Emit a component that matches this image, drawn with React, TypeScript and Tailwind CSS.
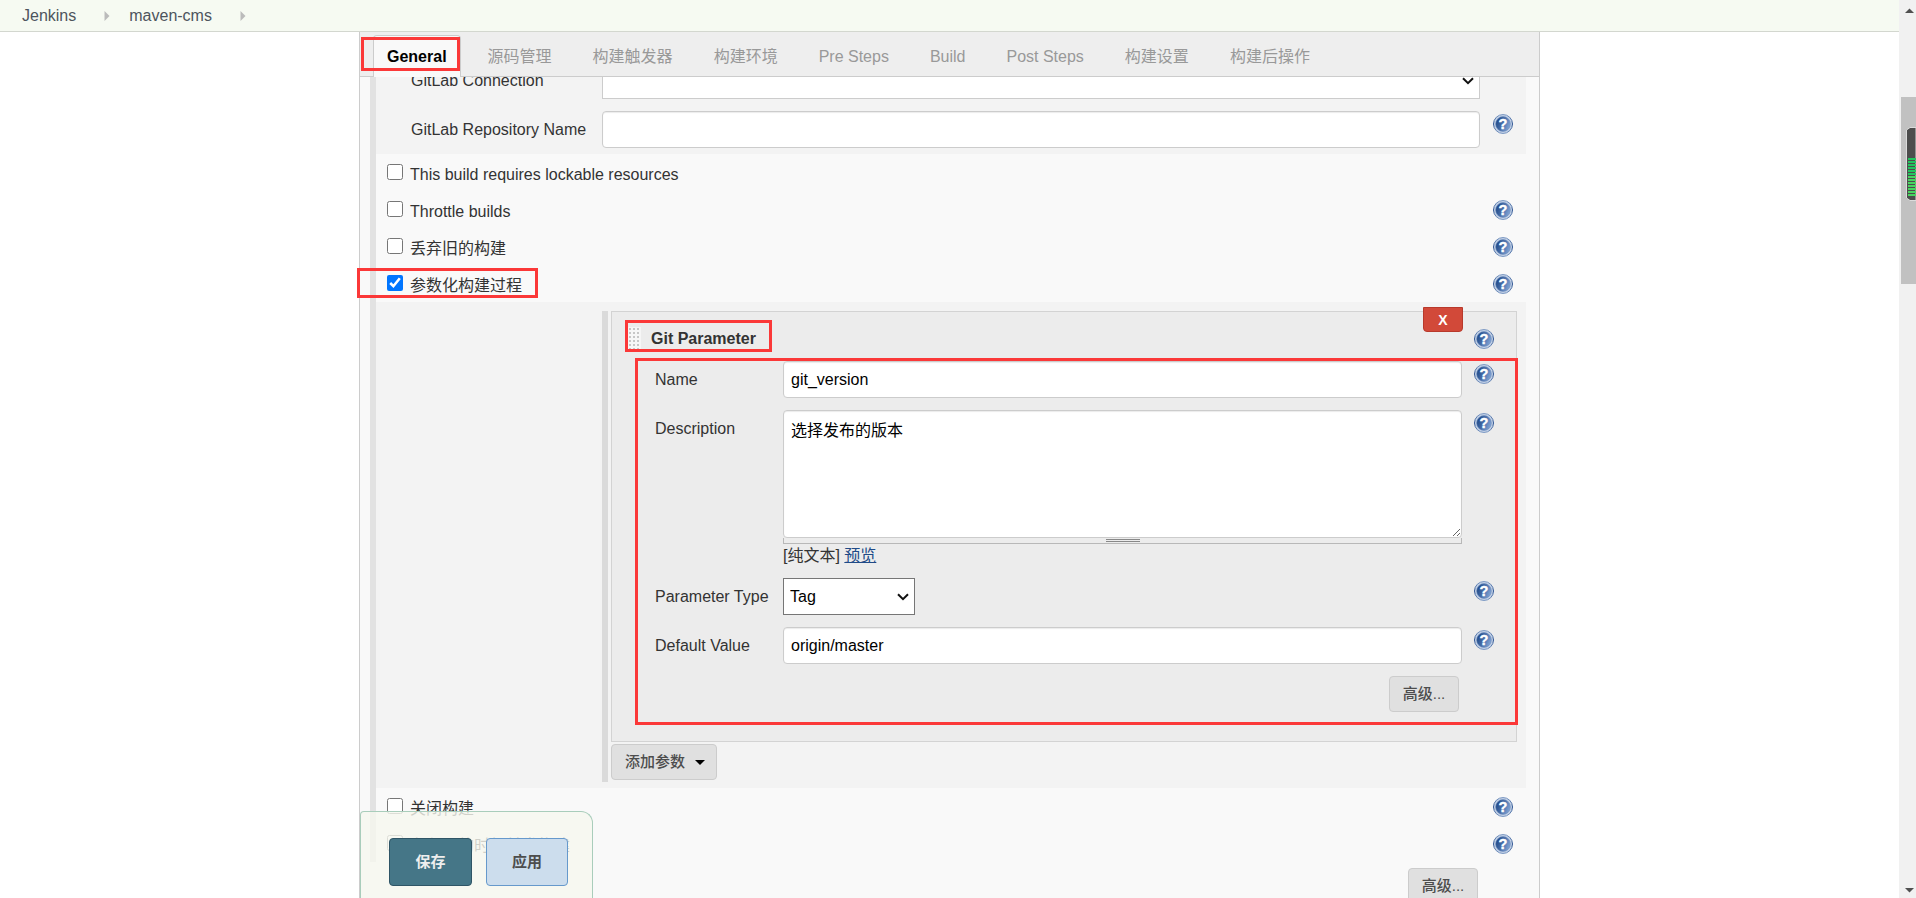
import React, { ReactNode } from 'react'

const tabs = ['General', '源码管理', '构建触发器', '构建环境', 'Pre Steps', 'Build', 'Post Steps', '构建设置', '构建后操作']

const inputClass =
  'block w-full rounded border border-[#ccc] bg-white px-[7px] text-base text-black shadow-[inset_0_1px_1px_rgba(0,0,0,0.08)] outline-none'

const grayButton = 'h-9 rounded border border-[#ccc] bg-[#e0e0e0] text-[15px] font-medium text-[#4d4d4d]'

function HelpIcon() {
  return (
    <button type="button" aria-label="Help" className="block size-5 shrink-0">
      <svg viewBox="0 0 20 20" className="size-5">
        <defs>
          <linearGradient id="helpFill" x1="0" y1="0.3" x2="1" y2="0.7">
            <stop offset="0" stopColor="#1d4785" />
            <stop offset="0.5" stopColor="#4a70ab" />
            <stop offset="1" stopColor="#86a8d8" />
          </linearGradient>
          <linearGradient id="helpRing" x1="0" y1="0" x2="0" y2="1">
            <stop offset="0" stopColor="#7f9bc4" />
            <stop offset="0.5" stopColor="#2a5190" />
            <stop offset="1" stopColor="#7f9bc4" />
          </linearGradient>
        </defs>
        <circle cx="10" cy="10" r="9.5" fill="#c3d1e6" stroke="url(#helpRing)" strokeWidth="1" />
        <circle cx="10" cy="10" r="7.4" fill="url(#helpFill)" stroke="#6f8fbf" strokeWidth="0.6" />
        <text
          x="10"
          y="15.2"
          textAnchor="middle"
          fontFamily="Liberation Sans, sans-serif"
          fontWeight="bold"
          fontSize="14.5"
          fill="#fff"
          stroke="#fff"
          strokeWidth="0.4"
        >
          ?
        </text>
      </svg>
    </button>
  )
}

function Crumb({ text }: { text: string }) {
  return (
    <li className="flex items-center">
      <a href="#" className="text-base leading-6 text-[#4d545d]">{text}</a>
      <svg viewBox="0 0 6 10" className="ml-7 mr-[19px] h-2.5 w-1.5">
        <path d="M0.5 0L5.5 5L0.5 10Z" fill="#bbb" />
      </svg>
    </li>
  )
}

interface SelectProps {
  id: string
  className: string
  children?: ReactNode
}

function Select({ id, className, children }: SelectProps) {
  return (
    <div className="grid items-center">
      <select
        id={id}
        className={`col-start-1 row-start-1 h-[37px] appearance-none border bg-white px-1.5 text-base text-black ${className}`}
      >
        {children}
      </select>
      <svg viewBox="0 0 12 8" className="pointer-events-none col-start-1 row-start-1 mr-1.5 h-2 w-3 justify-self-end">
        <path d="M1 1.200L6 6.200L11 1.200" fill="none" stroke="#111" strokeWidth="2" />
      </svg>
    </div>
  )
}

function CheckRow({ id, label, checked = false, help = true, marked = false }: {
  id: string
  label: string
  checked?: boolean
  help?: boolean
  marked?: boolean
}) {
  return (
    <div className="relative flex h-[37px] items-start pl-[11px] pr-[13px]">
      <input id={id} type="checkbox" defaultChecked={checked} className="mt-2.5 size-4 accent-[#0075ff]" />
      <label htmlFor={id} className="ml-[7px] mt-[9px] flex-1 text-base leading-6">{label}</label>
      {help && <div className="mt-[9px]"><HelpIcon /></div>}
      {marked && <div className="pointer-events-none absolute -left-[19px] top-[3px] h-[30px] w-[181px] border-3 border-[#fb3838]" />}
    </div>
  )
}

// 外层表单行
function OuterRow({ id, label, help, children }: { id: string; label: string; help?: boolean; children: ReactNode }) {
  return (
    <div className="flex items-start pl-[35px] pr-[13px]">
      <label htmlFor={id} className="w-[191px] shrink-0 pt-px leading-9">{label}</label>
      <div className="flex-1">{children}</div>
      <div className="ml-[13px] mt-[3px] w-5 shrink-0">{help && <HelpIcon />}</div>
    </div>
  )
}

// 参数区表单行
function ParamRow({ id, label, children }: { id: string; label: string; children: ReactNode }) {
  return (
    <div className="flex items-start pl-[43px] pr-[22px]">
      <label htmlFor={id} className="w-32 shrink-0 pt-px leading-9">{label}</label>
      <div className="flex-1">{children}</div>
      <div className="ml-3 mt-[3px] shrink-0"><HelpIcon /></div>
    </div>
  )
}

function GitParameter() {
  return (
    <div className="relative border border-[#d3d3d3] bg-[#ececec] pb-[29px]">
      <button
        type="button"
        className="absolute -top-[5px] right-[53px] h-[25px] w-10 rounded-b border border-[#b8392b] bg-[#d24939] text-sm font-bold leading-none text-white"
      >
        X
      </button>
      <div className="flex h-[49px] items-start pl-4 pr-[22px]">
        <div className="relative mt-3.5 flex items-center">
          <svg className="h-[22px] w-[13px]">
            <defs>
              <pattern id="grip" width="4" height="4" patternUnits="userSpaceOnUse">
                <rect width="4" height="4" fill="#f6f6f6" />
                <rect x="1" y="1" width="2" height="2" fill="#c6c6c6" />
              </pattern>
            </defs>
            <rect width="13" height="22" fill="url(#grip)" />
          </svg>
          <b className="ml-2.5 pt-0.5 leading-[22px]">Git Parameter</b>
          <div className="pointer-events-none absolute -left-[3px] -top-1.5 h-8 w-[147px] border-3 border-[#fb3838]" />
        </div>
        <div className="ml-auto mt-[17px]"><HelpIcon /></div>
      </div>

      <div className="relative flex flex-col gap-3">
        <ParamRow id="name" label="Name">
          <input id="name" defaultValue="git_version" className={`${inputClass} h-[37px]`} />
        </ParamRow>
        <ParamRow id="description" label="Description">
          <textarea id="description" defaultValue="选择发布的版本" className={`${inputClass} h-32 resize py-2 leading-6`} />
          <div className="flex h-1.5 flex-col items-center justify-center gap-px border border-t-0 border-[#b8b8b8]">
            <div className="h-px w-[34px] bg-[#888]" />
            <div className="h-px w-[34px] bg-[#888]" />
          </div>
          <div className="-mb-0.5 h-6 leading-6">
            [纯文本] <a href="#" className="text-[#204a87] underline">预览</a>
          </div>
        </ParamRow>
        <ParamRow id="type" label="Parameter Type">
          <div className="w-[132px]">
            <Select id="type" className="border-[#767676]">
              <option>Tag</option>
            </Select>
          </div>
        </ParamRow>
        <ParamRow id="default" label="Default Value">
          <input id="default" defaultValue="origin/master" className={`${inputClass} h-[37px]`} />
        </ParamRow>
        <div className="flex justify-end pr-[57px]">
          <button type="button" className={`${grayButton} w-[70px] pt-px`}>高级...</button>
        </div>
        <div className="pointer-events-none absolute -bottom-[13px] -right-0.5 -top-[3px] left-[23px] border-3 border-[#fb3838]" />
      </div>
    </div>
  )
}

function ScrollTrack() {
  return (
    <div className="relative flex w-[17px] shrink-0 flex-col items-end bg-[#f1f1f1]">
      <svg viewBox="0 0 17 17" className="size-[17px]">
        <path d="M6 13L10.500 8.500L15 13Z" fill="#505050" />
      </svg>
      <div className="mt-20 h-[187px] w-[15px] bg-[#c1c1c1]" />
      <svg viewBox="0 0 17 17" className="mt-auto size-[17px]">
        <path d="M6 7L10.500 11.500L15 7Z" fill="#505050" />
      </svg>
      {/* 电量小挂件 */}
      <svg viewBox="0 0 10 74" className="absolute right-0 top-[127px] h-[74px] w-2.5">
        <path d="M10 0.500H4L0.500 3V71L4 73.500H10Z" fill="#4d4d4d" stroke="#dcdcdc" />
        {Array.from({ length: 13 }, (_, i) => (
          <rect key={i} x="2" y={31 + i * 3} width="8" height="2" fill={i < 6 ? '#22c55e' : '#48d560'} />
        ))}
      </svg>
    </div>
  )
}

export default function App() {
  return (
    <div className="flex h-screen overflow-hidden bg-white font-['Liberation_Sans','Noto_Sans_CJK_SC',sans-serif] text-base text-[#333]">
      <div className="flex min-w-0 flex-1 flex-col">
        <nav className="h-8 shrink-0 border-b border-[#d3d7cf] bg-[#f6faf2] pl-[22px]">
          <ul className="flex h-[31px] items-center">
            <Crumb text="Jenkins" />
            <Crumb text="maven-cms" />
          </ul>
        </nav>

        <main className="relative mx-auto flex min-h-0 w-full max-w-[1181px] flex-1 flex-col border-x border-[#ccc] bg-[#f9f9f9]">
          <div className="relative flex h-[45px] shrink-0 items-end gap-[13px] border-b border-[#ccc] bg-[#eee] pl-[13px]">
            {tabs.map((tab, i) => (
              <button
                type="button"
                key={tab}
                className={
                  i === 0
                    ? '-mb-px h-[42px] rounded-t border border-b-0 border-[#ccc] bg-[#f9f9f9] px-[13px] font-bold text-black'
                    : 'h-[41px] border border-transparent px-[13px] pt-0.5 text-[#999]'
                }
              >
                {tab}
              </button>
            ))}
            <div className="pointer-events-none absolute left-px top-[5px] h-[34px] w-[99px] border-3 border-[#fb3838]" />
          </div>

          <form className="min-h-0 flex-1 overflow-clip pl-2.5 pr-[13px] [overflow-clip-margin:4px]">
            <div className="h-[785px] border-l-6 border-[#e2e2e2]">
              <div className="flex h-[77px] flex-col justify-end gap-3 overflow-hidden bg-[#f3f3f3] pb-1.5">
                <OuterRow id="connection" label="GitLab Connection">
                  <Select id="connection" className="border-[#ccc]" />
                </OuterRow>
                <OuterRow id="repo" label="GitLab Repository Name" help>
                  <input id="repo" className={`${inputClass} h-[37px]`} />
                </OuterRow>
              </div>

              <CheckRow id="lockable" label="This build requires lockable resources" help={false} />
              <CheckRow id="throttle" label="Throttle builds" />
              <CheckRow id="discard" label="丢弃旧的构建" />
              <CheckRow id="params" label="参数化构建过程" checked marked />

              <div className="bg-[#f3f3f3] pb-1.5 pl-[226px] pr-[9px] pt-[9px]">
                <div className="border-l-6 border-[#dadada] pb-0.5 pl-[3px]">
                  <GitParameter />
                  <button type="button" className={`${grayButton} mt-0.5 flex w-[106px] items-center pl-[13px] pt-px`}>
                    添加参数
                    <svg viewBox="0 0 10 5" className="ml-2.5 h-[5px] w-2.5">
                      <path d="M0 0H10L5 5Z" fill="#000" />
                    </svg>
                  </button>
                </div>
              </div>

              <CheckRow id="disable" label="关闭构建" />
              <CheckRow id="concurrent" label="在必要的时候并发构建" />
            </div>
            <div className="flex justify-end pr-12 pt-1.5">
              <button type="button" className={`${grayButton} w-[70px] pt-px`}>高级...</button>
            </div>
          </form>

          <div className="absolute bottom-0 left-0 flex gap-3.5 rounded-tl rounded-tr-xl border border-b-0 border-[#a9cdbb] bg-[#f6f8ef]/80 pb-3 pl-7 pr-6 pt-[26px]">
            <button type="button" className="h-12 w-[83px] rounded border border-[#2f5566] bg-[#457687] text-[15px] font-bold text-[#eee]">
              保存
            </button>
            <button type="button" className="h-12 w-[82px] rounded border border-[#6699cc] bg-[#ccdded] text-[15px] font-bold text-[#4d4d4d]">
              应用
            </button>
          </div>
        </main>
      </div>
      <ScrollTrack />
    </div>
  )
}
